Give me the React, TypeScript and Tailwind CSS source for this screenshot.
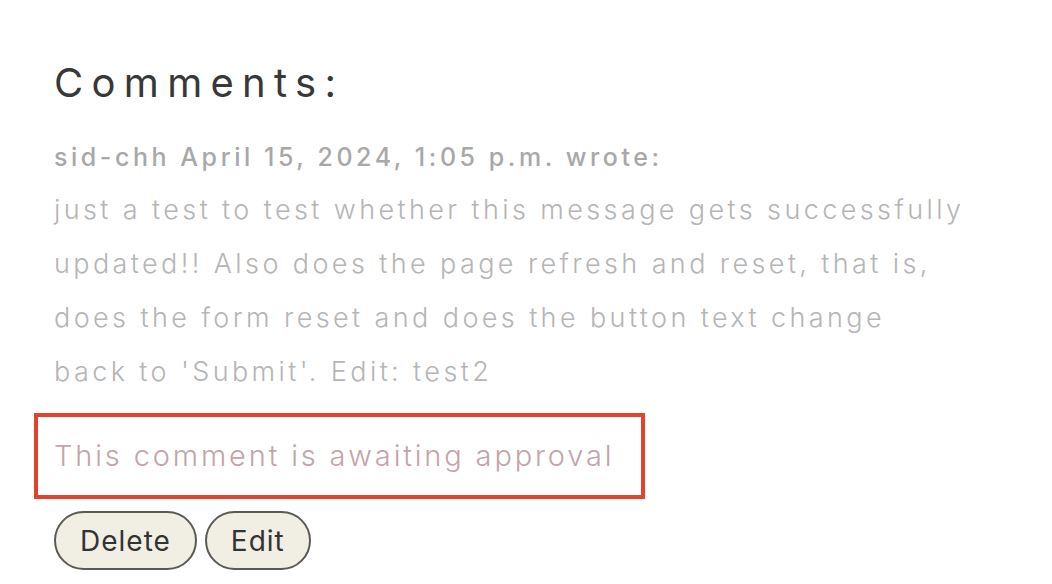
import React from "react";

const App = () => {
  return (
    <div className="min-h-screen bg-white px-[54px] pt-[59px] font-['Inter',sans-serif]">
      {/* Heading */}
      <h2 className="text-[40px] font-normal leading-[48px] tracking-[8.3px] text-[#383838]">
        Comments:
      </h2>

      {/* Comment */}
      <div className="mt-[34px]">
        <p className="text-[25px] font-medium leading-[32px] tracking-[3.55px] text-[#a8a8a8]">
          sid-chh April 15, 2024, 1:05 p.m. wrote:
        </p>
        <p className="mt-[10px] w-[914px] text-[27px] font-light leading-[54px] tracking-[3.4px] text-[#b5b5b5]">
          just a test to test whether this message gets successfully updated!!
          Also does the page refresh and reset, that is, does the form reset
          and does the button text change back to 'Submit'. Edit: test2
        </p>

        <div className="-ml-5 mt-[14px] h-[86px] w-[611px] border-4 border-[#e4432b] pl-4">
          <p className="text-[29px] font-light leading-[78px] tracking-[2.85px] text-[#c4a3ab]">
            This comment is awaiting approval
          </p>
        </div>

        <div className="mt-3 flex gap-2">
          <button className="h-[59px] rounded-full border-2 border-[#5a5a55] bg-[#f1efe3] px-6 text-[28px] leading-none tracking-[1px] text-[#333]">
            Delete
          </button>
          <button className="h-[59px] rounded-full border-2 border-[#5a5a55] bg-[#f1efe3] px-6 text-[28px] leading-none tracking-[1px] text-[#333]">
            Edit
          </button>
        </div>
      </div>
    </div>
  );
};

export default App;
